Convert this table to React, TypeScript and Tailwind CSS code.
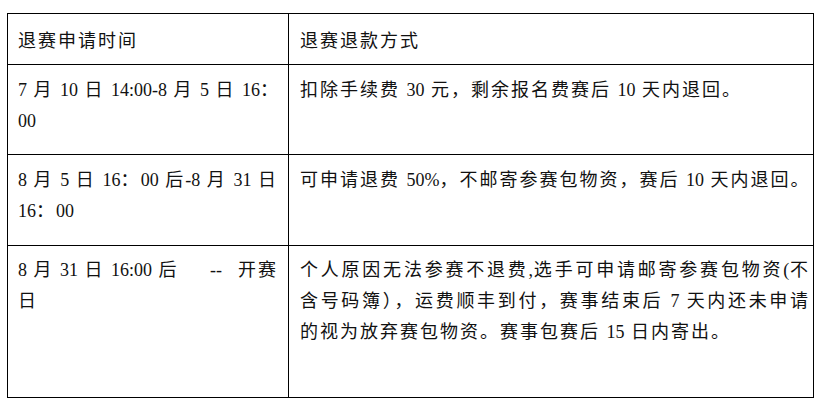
import React from "react";

const CJK = /([\u2E80-\u9FFF\u3000-\u303F\uFF00-\uFFEF]+)/;

function T({ s }: { s: string }) {
  const parts = s.split(CJK);
  return (
    <>
      {parts.map((p, i) =>
        i % 2 === 1 ? (
          <span key={i} className="tracking-[2px]">
            {p}
          </span>
        ) : (
          <span key={i}>{p}</span>
        )
      )}
    </>
  );
}

function Line({ s, j = false }: { s: string; j?: boolean }) {
  return (
    <div className={j ? "whitespace-nowrap [text-align-last:justify] text-justify" : "whitespace-nowrap"}>
      <T s={s} />
    </div>
  );
}

export default function App() {
  return (
    <div className="w-[825px] h-[406px] bg-white overflow-hidden">
      <div
        className="ml-[7px] mt-[13px] w-[807px] border-l border-t border-black grid grid-cols-[281px_525px] grid-rows-[51px_90px_91px_152px] text-[18px] leading-[31px] text-[#111] [word-spacing:2px]"
        style={{ fontFamily: '"Liberation Serif", "Noto Sans CJK SC", serif' }}
      >
        {/* header */}
        <div className="border-r border-b border-black pl-[10px] pt-[12px]">
          <Line s="退赛申请时间" />
        </div>
        <div className="border-r border-b border-black pl-[11px] pt-[12px]">
          <Line s="退赛退款方式" />
        </div>

        {/* row 1 */}
        <div className="border-r border-b border-black pl-[10px] pt-[10px]">
          <div className="w-[260px]">
            <Line s="7 月 10 日 14:00-8 月 5 日 16：" j />
            <Line s="00" />
          </div>
        </div>
        <div className="border-r border-b border-black pl-[11px] pt-[10px]">
          <Line s="扣除手续费 30 元，剩余报名费赛后 10 天内退回。" />
        </div>

        {/* row 2 */}
        <div className="border-r border-b border-black pl-[10px] pt-[10px]">
          <div className="w-[260px]">
            <Line s="8 月 5 日 16：00 后-8 月 31 日" j />
            <Line s="16：00" />
          </div>
        </div>
        <div className="border-r border-b border-black pl-[11px] pt-[10px]">
          <Line s="可申请退费 50%，不邮寄参赛包物资，赛后 10 天内退回。" />
        </div>

        {/* row 3 */}
        <div className="border-r border-b border-black pl-[10px] pt-[9px]">
          <div className="w-[260px]">
            <div className="flex whitespace-nowrap">
              <span>
                <T s="8 月 31 日 16:00 后" />
              </span>
              <span className="ml-auto">--</span>
              <span className="ml-[16px]">
                <T s="开赛" />
              </span>
            </div>
            <Line s="日" />
          </div>
        </div>
        <div className="border-r border-b border-black pl-[11px] pt-[9px]">
          <div className="w-[510px]">
            <Line s="个人原因无法参赛不退费,选手可申请邮寄参赛包物资(不" j />
            <Line s="含号码簿），运费顺丰到付，赛事结束后 7 天内还未申请" j />
            <Line s="的视为放弃赛包物资。赛事包赛后 15 日内寄出。" />
          </div>
        </div>
      </div>
    </div>
  );
}
